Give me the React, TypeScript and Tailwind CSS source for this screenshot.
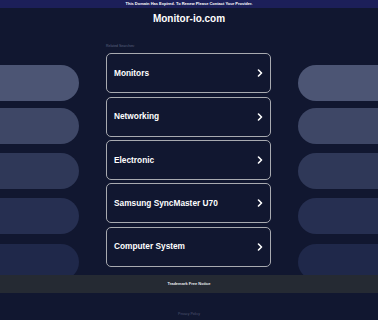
const searches = ['Monitors', 'Networking', 'Electronic', 'Samsung SyncMaster U70', 'Computer System']

// side pills, top offsets measured from the row start
const pills = [
  { mt: 'mt-[36px]', bg: 'bg-[#4c5574]' },
  { mt: 'mt-[7px]', bg: 'bg-[#3e4766]' },
  { mt: 'mt-[9px]', bg: 'bg-[#2f3858]' },
  { mt: 'mt-[9px]', bg: 'bg-[#262f51]' },
  { mt: 'mt-[10px]', bg: 'bg-[#1f284a]' },
]

function Chevron() {
  return (
    <svg width="6" height="8" viewBox="0 0 6 8" fill="none">
      <path d="M1.5 1 L4.5 4 L1.5 7" stroke="white" strokeWidth="1.6" strokeLinecap="round" strokeLinejoin="round" />
    </svg>
  )
}

function PillColumn({ side }: { side: 'left' | 'right' }) {
  return (
    <div className="flex flex-col">
      {pills.map((p, i) => (
        <div
          key={i}
          className={`${p.mt} ${p.bg} h-[36px] ${side === 'left' ? 'rounded-r-[18px]' : 'rounded-l-[18px]'} shrink-0`}
        />
      ))}
    </div>
  )
}

export default function App() {
  return (
    <div
      className="w-full h-[320px] overflow-hidden bg-[#111730] flex flex-col"
      style={{ fontFamily: '"Liberation Sans", Arial, sans-serif' }}
    >
      {/* expired notice */}
      <div className="h-[8px] bg-[#1c1f59] flex items-center justify-center shrink-0">
        <span className="text-[4px] leading-none font-bold text-white">
          This Domain Has Expired. To Renew Please Contact Your Provider.
        </span>
      </div>

      {/* title */}
      <div className="h-[21px] flex items-center justify-center shrink-0">
        <h1 className="text-[10px] leading-none font-bold text-white">Monitor-io.com</h1>
      </div>

      {/* pills + related searches */}
      <div className="h-[246px] overflow-hidden flex shrink-0">
        <div className="w-[79px] shrink-0">
          <PillColumn side="left" />
        </div>
        <div className="w-[165px] ml-[27px] shrink-0 pt-[14px]">
          <p className="text-[3.5px] leading-[7px] text-[#5d6480] mb-[3.3px]">Related Searches:</p>
          <div className="flex flex-col gap-[3.33px]">
            {searches.map((s) => (
              <div
                key={s}
                className="h-[40px] border-[1.5px] border-[#a8aab0] rounded-[5px] flex items-center justify-between pl-[7px] pr-[7px]"
              >
                <span className="text-[8.3px] font-bold text-white leading-none">{s}</span>
                <Chevron />
              </div>
            ))}
          </div>
        </div>
        <div className="flex-1 ml-[27px]">
          <PillColumn side="right" />
        </div>
      </div>

      {/* footer */}
      <div className="h-[18px] bg-[#252a33] flex items-center justify-center shrink-0">
        <span className="text-[4px] leading-none font-bold text-[#e5e7eb]">Trademark Free Notice</span>
      </div>
      <div className="flex-1 flex items-end justify-center pb-[4px]">
        <span className="text-[3.5px] leading-none text-[#4f5670]">Privacy Policy</span>
      </div>
    </div>
  )
}
